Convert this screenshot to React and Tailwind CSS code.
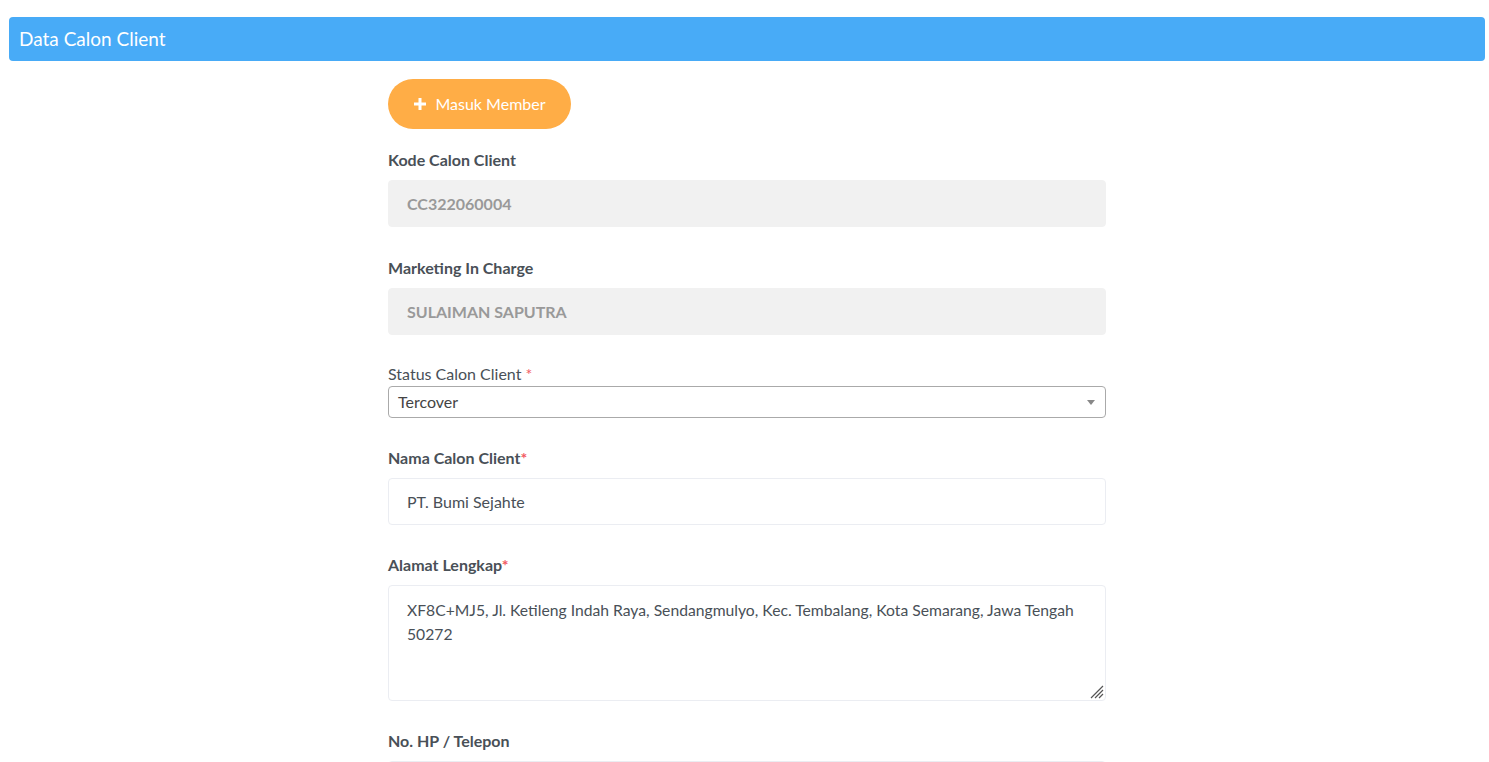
import React from 'react';

const inputCls =
  'block w-full h-[47px] px-[18px] rounded-[4px] text-[16px] border focus:outline-none';

const Field = ({ label, required, children, mb = 'mb-[29.5px]' }) => (
  <div className={mb}>
    <label className="block text-[16px] leading-[21px] font-bold text-[#495057] mb-[10px]">
      {label}
      {required && <span className="text-[#f25961]">*</span>}
    </label>
    {children}
  </div>
);

const App = () => {
  return (
    <div className="min-h-screen bg-white pt-[17px] pl-[9px] pr-[4px]" style={{ fontFamily: 'Lato, "Open Sans", sans-serif' }}>
      <div className="h-[44px] bg-[#48abf7] rounded-[4px] flex items-center px-[10px]">
        <h4 className="text-white text-[19px]">Data Calon Client</h4>
      </div>

      <div className="w-[718px] mx-auto pt-[18px]">
        <button
          type="button"
          className="h-[50px] w-[183px] rounded-full bg-[#ffad46] text-white text-[16px] flex items-center justify-center gap-[8px] mb-[20px]"
        >
          <svg width="14" height="14" viewBox="0 0 14 14">
            <path d="M7 1v12M1 7h12" stroke="white" strokeWidth="3" />
          </svg>
          Masuk Member
        </button>

        <Field label="Kode Calon Client">
          <input
            readOnly
            value="CC322060004"
            className={`${inputCls} bg-[#f1f1f1] border-[#f1f1f1] text-[#999] font-bold`}
          />
        </Field>

        <Field label="Marketing In Charge">
          <input
            readOnly
            value="SULAIMAN SAPUTRA"
            className={`${inputCls} bg-[#f1f1f1] border-[#f1f1f1] text-[#999] font-bold`}
          />
        </Field>

        <div className="mb-[28.5px]">
          <label className="block text-[16px] leading-5 text-[#495057] mb-[2px]">
            Status Calon Client <span className="text-[#f25961]">*</span>
          </label>
          <div className="relative h-[32px] border border-[#aaa] rounded-[4px] flex items-center pl-[9px] text-[16px] text-[#444]">
            Tercover
            <span className="absolute right-[10px] top-[13px] w-0 h-0 border-l-[4px] border-r-[4px] border-t-[5px] border-l-transparent border-r-transparent border-t-[#888]" />
          </div>
        </div>

        <Field label="Nama Calon Client" required>
          <input
            defaultValue="PT. Bumi Sejahte"
            className={`${inputCls} bg-white border-[#ebedf2] text-[#495057]`}
          />
        </Field>

        <Field label="Alamat Lengkap" required mb="mb-[28.5px]">
          <div className="relative">
            <textarea
              defaultValue="XF8C+MJ5, Jl. Ketileng Indah Raya, Sendangmulyo, Kec. Tembalang, Kota Semarang, Jawa Tengah 50272"
              className="block w-full h-[116px] px-[18px] py-[12px] rounded-[4px] text-[15.7px] leading-6 border border-[#ebedf2] text-[#495057] focus:outline-none resize-none"
            />
            <svg className="absolute right-[2px] bottom-[2px] pointer-events-none" width="16" height="16" viewBox="0 0 16 16">
              <path d="M15 3L3 15M15 7L7 15M15 11L11 15" stroke="#555" strokeWidth="1.2" />
            </svg>
          </div>
        </Field>

        <Field label="No. HP / Telepon">
          <input className={`${inputCls} bg-white border-[#ebedf2] text-[#495057]`} />
        </Field>
      </div>
    </div>
  );
};

export default App;
